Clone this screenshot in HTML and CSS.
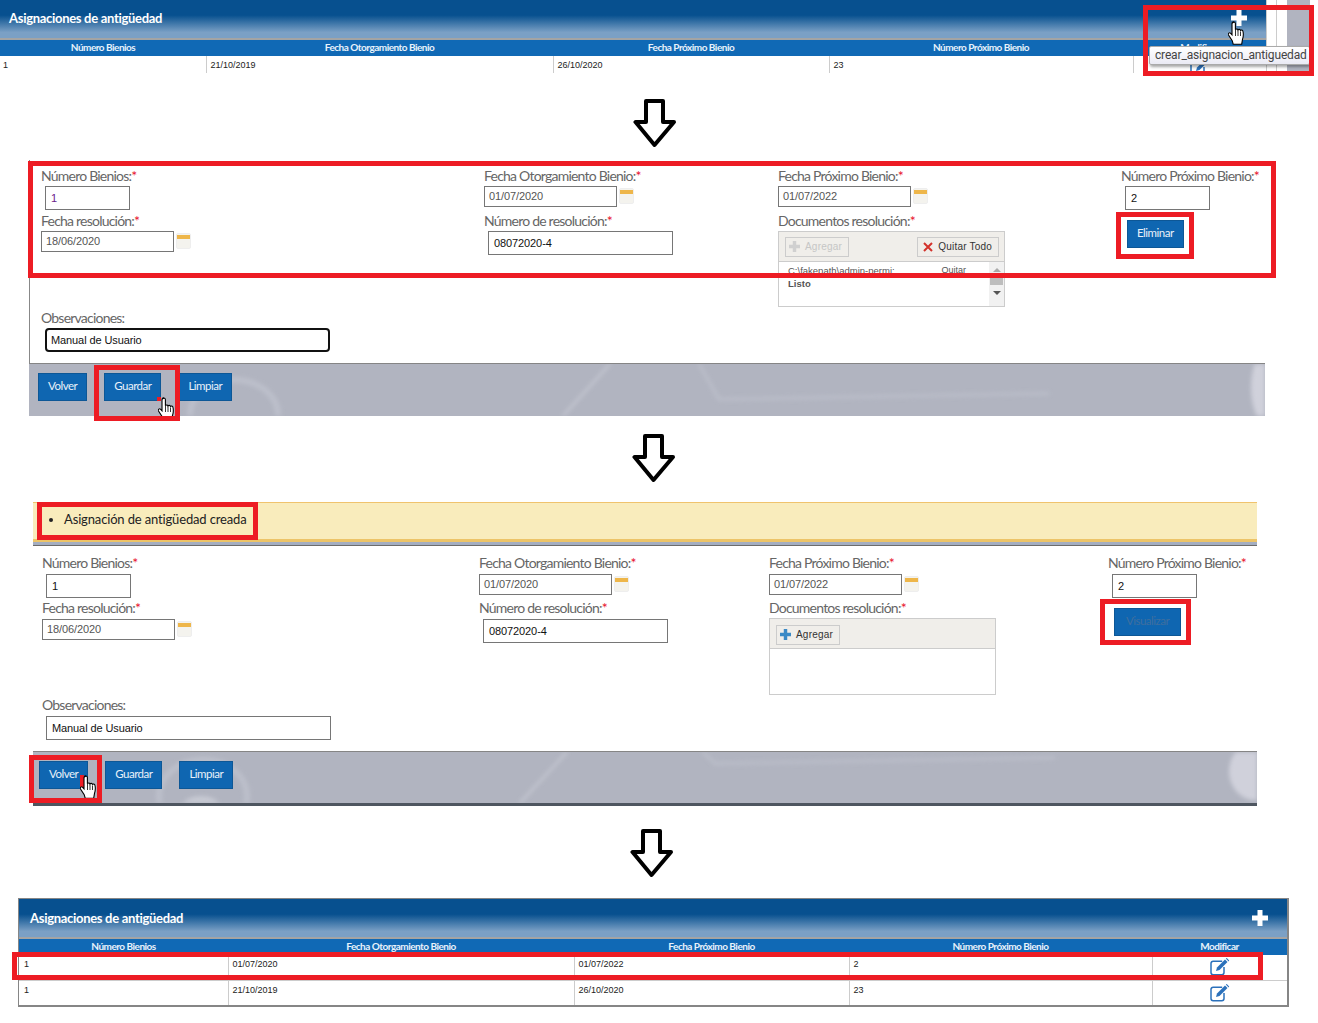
FILE: index.html
```html
<!DOCTYPE html>
<html lang="en">
<head>
    <meta charset="UTF-8">
    <title>Asignaciones de antigüedad</title>
    <link rel="stylesheet" href="styles.css">
</head>

<body>
    <svg class="defs" width="0" height="0">
        <symbol id="hand" viewBox="1 0 16 25">
            <path d="M5 1.500c1 -.8 2.300 -.3 2.400 1v6.300c.4 -1 2.300 -1 2.600 .2c.5 -.9 2.200 -.8 2.500 .4c.6 -.7 2.300 -.4 2.500 1c.5 2.400 .4 5.500 -.5 8l-.8 4.800h-8.500l-1 -3.500l-3.700 -5.700c-.9 -1.600 .9 -2.900 2.200 -1.700l1.300 1.500v-11.300c0 -.4 .1 -.8 1 -1.500z" fill="#fff" stroke="#000" stroke-width="1.100"/>
            <path d="M7.500 9v6M10 9.500v5.500M12.500 10.500v4.500" stroke="#000" stroke-width=".8" fill="none"/>
        </symbol>
        <symbol id="arrow" viewBox="0 0 44 50">
            <path d="M13 3h17v21h11l-19.500 23l-19 -23h10.500z" fill="#fff" stroke="#000" stroke-width="4" stroke-linejoin="round"/>
        </symbol>
        <symbol id="plus" viewBox="0 0 16 16">
            <path d="M5.500 0h5v5.500h5.500v5h-5.500v5.500h-5v-5.500h-5.500v-5h5.500z"/>
        </symbol>
        <symbol id="edit" viewBox="0 0 20 18">
            <path d="M14 9v5.500c0 1.400 -.8 2.200 -2.200 2.200h-8.600c-1.400 0 -2.200 -.8 -2.200 -2.200v-9c0 -1.400 .8 -2.200 2.200 -2.200h9" fill="none" stroke="#2b71bb" stroke-width="1.500"/>
            <path d="M6 13l1 -3.500l8 -8l2.500 2.500l-8 8z" fill="#2b71bb"/>
            <path d="M15.800 .6l1 -.5l2.400 2.400l-.6 1z" fill="#2b71bb"/>
        </symbol>
    </svg>

    <div class="panelRow">
        <div class="listPanel">
            <div class="listHead">
                <span>Asignaciones de antigüedad</span>
                <svg class="plusIcon"><use href="#plus"/></svg>
            </div>
            <table class="listTable">
                <colgroup><col class="c1"><col class="c2"><col class="c3"><col class="c4"><col class="c5"></colgroup>
                <tr>
                    <th>Número Bienios</th>
                    <th>Fecha Otorgamiento Bienio</th>
                    <th>Fecha Próximo Bienio</th>
                    <th>Número Próximo Bienio</th>
                    <th>Modificar</th>
                </tr>
                <tr class="shortRow">
                    <td>1</td>
                    <td>21/10/2019</td>
                    <td>26/10/2020</td>
                    <td>23</td>
                    <td class="editCell"><svg class="editIcon"><use href="#edit"/></svg></td>
                </tr>
            </table>
        </div>
        <div class="sideGap"></div>
        <div class="sideBlock"></div>
    </div>

    <svg class="arrow arrow1"><use href="#arrow"/></svg>

    <section class="formBlock blockOne">
        <div class="formBody">
            <div class="formGrid">
                <div class="field">
                    <label>Número Bienios:<i>*</i></label>
                    <div class="textInput small indent purple">1</div>
                </div>
                <div class="field">
                    <label>Fecha Otorgamiento Bienio:<i>*</i></label>
                    <div class="dateRow"><div class="dateInput">01/07/2020</div><span class="calendar"></span></div>
                </div>
                <div class="field">
                    <label>Fecha Próximo Bienio:<i>*</i></label>
                    <div class="dateRow"><div class="dateInput">01/07/2022</div><span class="calendar"></span></div>
                </div>
                <div class="field">
                    <label>Número Próximo Bienio:<i>*</i></label>
                    <div class="textInput small indent">2</div>
                </div>

                <div class="field">
                    <label>Fecha resolución:<i>*</i></label>
                    <div class="dateRow"><div class="dateInput">18/06/2020</div><span class="calendar"></span></div>
                </div>
                <div class="field">
                    <label>Número de resolución:<i>*</i></label>
                    <div class="textInput wide indent">08072020-4</div>
                </div>
                <div class="field">
                    <label>Documentos resolución:<i>*</i></label>
                    <div class="docBox">
                        <div class="docBar spread">
                            <span class="docBtn disabled"><svg class="miniPlus grey"><use href="#plus"/></svg>Agregar</span>
                            <span class="docBtn"><svg class="miniX" viewBox="0 0 10 10"><path d="M1 1l8 8M9 1l-8 8"/></svg>Quitar Todo</span>
                        </div>
                        <div class="docList">
                            <div class="docFile"><span>C:\fakepath\admin-permi:</span><span class="quit">Quitar</span></div>
                            <div class="docDone">Listo</div>
                            <div class="scroll"><b class="up"></b><b class="thumb"></b><b class="down"></b></div>
                        </div>
                    </div>
                </div>
                <div class="field btnField"><button class="btn">Eliminar</button></div>
            </div>
            <div class="field obs">
                <label>Observaciones:</label>
                <div class="textInput long indent focused">Manual de Usuario</div>
            </div>
        </div>
        <div class="actionBar">
            <svg class="barArt" viewBox="0 0 1236 53" preserveAspectRatio="none">
                <ellipse cx="205" cy="52" rx="44" ry="36" fill="none" stroke="#c3c6d1" stroke-width="6"/>
                <path d="M581 0l-47 53" stroke="#d6d8e0" stroke-width="2" fill="none"/>
                <path d="M670 0l20 36l330 -6" stroke="#c2c5d0" stroke-width="3" fill="none"/>
                <ellipse cx="1240" cy="24" rx="18" ry="40" fill="#e1e1ea"/>
            </svg>
            <button class="btn">Volver</button>
            <button class="btn">Guardar</button>
            <button class="btn">Limpiar</button>
        </div>
    </section>

    <svg class="arrow arrow2"><use href="#arrow"/></svg>

    <section class="formBlock blockTwo">
        <div class="message">
            <ul><li>Asignación de antigüedad creada</li></ul>
        </div>
        <div class="strip"></div>
        <div class="formBody">
            <div class="formGrid">
                <div class="field">
                    <label>Número Bienios:<i>*</i></label>
                    <div class="textInput small indent">1</div>
                </div>
                <div class="field">
                    <label>Fecha Otorgamiento Bienio:<i>*</i></label>
                    <div class="dateRow"><div class="dateInput">01/07/2020</div><span class="calendar"></span></div>
                </div>
                <div class="field">
                    <label>Fecha Próximo Bienio:<i>*</i></label>
                    <div class="dateRow"><div class="dateInput">01/07/2022</div><span class="calendar"></span></div>
                </div>
                <div class="field">
                    <label>Número Próximo Bienio:<i>*</i></label>
                    <div class="textInput small indent">2</div>
                </div>

                <div class="field">
                    <label>Fecha resolución:<i>*</i></label>
                    <div class="dateRow"><div class="dateInput">18/06/2020</div><span class="calendar"></span></div>
                </div>
                <div class="field">
                    <label>Número de resolución:<i>*</i></label>
                    <div class="textInput wide indent">08072020-4</div>
                </div>
                <div class="field">
                    <label>Documentos resolución:<i>*</i></label>
                    <div class="docBox">
                        <div class="docBar">
                            <span class="docBtn"><svg class="miniPlus"><use href="#plus"/></svg>Agregar</span>
                        </div>
                    </div>
                </div>
                <div class="field btnField"><button class="btn dim">Visualizar</button></div>
            </div>
            <div class="field obs">
                <label>Observaciones:</label>
                <div class="textInput long indent">Manual de Usuario</div>
            </div>
        </div>
        <div class="actionBar dark">
            <svg class="barArt" viewBox="0 0 1224 53" preserveAspectRatio="none">
                <ellipse cx="170" cy="46" rx="44" ry="38" fill="none" stroke="#c3c6d1" stroke-width="6"/>
                <ellipse cx="168" cy="58" rx="20" ry="12" fill="#d5d7df"/>
                <path d="M534 0l-47 53" stroke="#d6d8e0" stroke-width="2" fill="none"/>
                <path d="M670 0l12 12l340 -6" stroke="#c2c5d0" stroke-width="3" fill="none"/>
                <ellipse cx="1222" cy="20" rx="26" ry="30" fill="#e1e1ea"/>
            </svg>
            <button class="btn">Volver</button>
            <button class="btn">Guardar</button>
            <button class="btn">Limpiar</button>
        </div>
    </section>

    <svg class="arrow arrow3"><use href="#arrow"/></svg>

    <div class="listPanel framed">
        <div class="listHead">
            <span>Asignaciones de antigüedad</span>
            <svg class="plusIcon"><use href="#plus"/></svg>
        </div>
        <table class="listTable">
            <colgroup><col class="d1"><col class="d2"><col class="d3"><col class="d4"><col class="d5"></colgroup>
            <tr>
                <th>Número Bienios</th>
                <th>Fecha Otorgamiento Bienio</th>
                <th>Fecha Próximo Bienio</th>
                <th>Número Próximo Bienio</th>
                <th>Modificar</th>
            </tr>
            <tr>
                <td>1</td>
                <td>01/07/2020</td>
                <td>01/07/2022</td>
                <td>2</td>
                <td class="editCell"><svg class="editIcon"><use href="#edit"/></svg></td>
            </tr>
            <tr>
                <td>1</td>
                <td>21/10/2019</td>
                <td>26/10/2020</td>
                <td>23</td>
                <td class="editCell"><svg class="editIcon"><use href="#edit"/></svg></td>
            </tr>
        </table>
    </div>

    <!-- annotations drawn over the screenshots -->
    <div class="tooltip">crear_asignacion_antiguedad</div>
    <svg class="hand hand1"><use href="#hand"/></svg>
    <span class="redDot dot2"></span>
    <svg class="hand hand2"><use href="#hand"/></svg>
    <span class="redDot dot3"></span>
    <svg class="hand hand3"><use href="#hand"/></svg>

    <div class="mark m1"></div>
    <div class="mark m2"></div>
    <div class="mark m3"></div>
    <div class="mark m4"></div>
    <div class="mark m5"></div>
    <div class="mark m6"></div>
    <div class="mark m7"></div>
    <div class="mark m8"></div>
</body></html>
```

FILE: styles.css
```css
* {
    margin: 0;
    padding: 0;
    box-sizing: border-box;
}

body {
    position: relative;
    width: 1318px;
    height: 1023px;
    overflow: hidden;
    background: #fff;
    font-family: Lato, "Liberation Sans", sans-serif;
}

.defs {
    position: absolute;
}

/* list panels */
.panelRow {
    display: flex;
    height: 73px;
}

.listPanel {
    width: 1266px;
    overflow: hidden;
}

.listPanel.framed {
    width: 1271px;
    height: 109px;
    margin-left: 18px;
    margin-top: 20px;
    border: 2px solid #868686;
    border-top-width: 1px;
    border-left-width: 1px;
}

.sideGap {
    width: 11px;
    height: 73px;
    border-left: 1px solid #ccc;
    border-right: 1px solid #ccc;
}

.sideBlock {
    width: 23px;
    height: 73px;
    margin-left: 10px;
    background: #b1b4c0;
}

.listHead {
    display: flex;
    justify-content: space-between;
    height: 40px;
    padding: 10px 19px 0 9px;
    background: linear-gradient(#07508f 0, #07508f 40%, #7ba0c5 85%, #7ba0c5 95%);
    border-bottom: 2px solid #a4a4a4;
    color: #fff;
    font-size: 13px;
    font-weight: 700;
    letter-spacing: -0.3px;
}

.framed .listHead {
    padding: 11px 19px 0 11px;
}

.plusIcon {
    width: 16px;
    height: 16px;
    fill: #fff;
}

.listTable {
    width: 100%;
    table-layout: fixed;
    border-collapse: collapse;
}

.c1 { width: 206px; }
.c2 { width: 347px; }
.c3 { width: 276px; }
.c4 { width: 304px; }
.d1 { width: 209px; }
.d2 { width: 346px; }
.d3 { width: 275px; }
.d4 { width: 303px; }

.listTable th {
    height: 16px;
    padding-bottom: 2px;
    background: #1069b5;
    color: #e8f2fb;
    font-size: 10px;
    font-weight: 700;
    letter-spacing: -0.5px;
    vertical-align: middle;
}

.listTable td {
    height: 25px;
    padding: 0 0 6px 4px;
    border-left: 1px solid #ccc;
    border-bottom: 1px solid #ccc;
    font-family: "Liberation Sans", sans-serif;
    font-size: 9px;
    color: #222;
}

.listTable td:first-child {
    border-left: none;
    padding-left: 3px;
}

.framed .listTable td:first-child {
    padding-left: 5px;
}

.shortRow td {
    height: 17px;
    padding: 0 0 3px 4px;
    border-bottom: none;
}

.listTable .editCell {
    padding: 0;
    text-align: center;
    overflow: hidden;
}

.editIcon {
    display: block;
    width: 20px;
    height: 18px;
    margin: 0 auto;
}

.shortRow .editIcon {
    margin-top: 2px;
}

/* arrows between steps */
.arrow {
    display: block;
    width: 44px;
    height: 50px;
}

.arrow1 { margin: 25px 0 0 633px; }
.arrow2 { margin: 17px 0 0 632px; }
.arrow3 { margin: 22px 0 0 630px; }

/* forms */
.blockOne {
    width: 1236px;
    margin: 12px 0 0 29px;
}

.blockOne .formBody {
    height: 203px;
    padding: 8px 0 0 11px;
    border-left: 1px solid #888;
}

.blockTwo {
    width: 1224px;
    margin: 19px 0 0 33px;
}

.blockTwo .formBody {
    height: 205px;
    padding: 10px 0 0 9px;
}

.formGrid {
    display: grid;
    grid-template-columns: 443px 294px 343px 1fr;
    grid-template-rows: 45px 97px;
}

.blockTwo .formGrid {
    grid-template-columns: 437px 290px 339px 1fr;
}

.field label {
    display: block;
    height: 18px;
    font-size: 14px;
    line-height: 15px;
    color: #666;
    letter-spacing: -0.78px;
    white-space: nowrap;
}

.blockTwo .field label {
    line-height: 13px;
}

.field label i {
    color: #e8112d;
    font-style: normal;
}

.textInput,
.dateInput {
    border: 1px solid #767676;
    background: #fff;
    font-family: "Liberation Sans", sans-serif;
    font-size: 11px;
    letter-spacing: -0.1px;
}

.textInput {
    height: 24px;
    padding: 5px 5px 0;
    color: #111;
}

.indent { margin-left: 4px; }
.small { width: 85px; }
.wide { width: 185px; }
.long { width: 285px; }
.purple { color: #6a1a8a; }

.focused {
    height: 24px;
    border: 2px solid #111;
    border-radius: 4px;
    padding: 4px 4px 0;
}

.dateRow {
    display: flex;
    align-items: flex-start;
}

.dateInput {
    width: 133px;
    height: 21px;
    padding: 3px 4px 0;
    color: #555;
}

.calendar {
    width: 15px;
    height: 16px;
    margin: 2px 0 0 2px;
    border: 1px solid #eee;
    border-radius: 2px;
    background: linear-gradient(#f4f3ee 0, #f4f3ee 1px, #eeb64a 1px, #eeb64a 5px, #f4f3ee 5px);
}

.docBox {
    width: 227px;
    height: 76px;
    border: 1px solid #ccc;
}

.blockTwo .docBox {
    height: 77px;
    margin-top: -1px;
}

.docBar {
    display: flex;
    align-items: center;
    height: 30px;
    padding: 0 5px 0 6px;
    background: #f0eeea;
    border-bottom: 1px solid #ccc;
}

.blockTwo .docBar {
    padding-top: 2px;
}

.docBar.spread {
    justify-content: space-between;
}

.docBtn {
    display: flex;
    align-items: center;
    gap: 5px;
    height: 20px;
    padding: 0 6px 0 3px;
    border: 1px solid #ccc;
    font-family: "Liberation Sans", sans-serif;
    font-size: 10px;
    letter-spacing: 0.2px;
    color: #333;
}

.docBtn.disabled {
    color: #c6c6c6;
}

.miniPlus {
    width: 11px;
    height: 11px;
    fill: #3a8ac6;
}

.miniPlus.grey {
    fill: #d0d0d0;
}

.miniX {
    width: 10px;
    height: 10px;
    margin-left: 2px;
    fill: none;
    stroke: #d3322b;
    stroke-width: 2;
}

.docList {
    position: relative;
    height: 44px;
    overflow: hidden;
    font-family: "Liberation Sans", sans-serif;
    font-size: 9.500px;
    color: #555;
}

.docFile {
    display: flex;
    justify-content: space-between;
    width: 178px;
    margin-left: 9px;
    padding-top: 3px;
}

.quit {
    font-size: 9px;
}

.docDone {
    margin: 2px 0 0 9px;
    font-weight: 700;
}

.scroll {
    position: absolute;
    top: 0;
    right: 0;
    display: flex;
    flex-direction: column;
    align-items: center;
    width: 15px;
    height: 44px;
    background: #f1f1f1;
}

.scroll b {
    display: block;
}

.scroll .up {
    margin-top: 6px;
    border: 4px solid transparent;
    border-top: none;
    border-bottom: 4px solid #aaa;
}

.scroll .thumb {
    width: 13px;
    height: 11px;
    margin-top: 2px;
    background: #bdbdbd;
}

.scroll .down {
    margin-top: 6px;
    border: 4px solid transparent;
    border-bottom: none;
    border-top: 4px solid #555;
}

.btnField {
    padding: 7px 0 0 6px;
}

.btn {
    position: relative;
    height: 28px;
    padding: 0 9px 4px;
    background: #0f66b1;
    border: 1px solid #0d5796;
    color: #e9f1f9;
    font-family: Lato, "Liberation Sans", sans-serif;
    font-size: 11.500px;
    letter-spacing: -0.5px;
}

.btn.dim {
    width: 67px;
    color: #3f6f9f;
}

.obs {
    margin-top: 0;
}

/* message */
.message {
    height: 40px;
    padding: 8px 0 0 31px;
    background: #f9ecbc;
    border-top: 1px solid #f0c36d;
    border-bottom: 3px solid #edc468;
    font-size: 13px;
    letter-spacing: -0.15px;
    color: #222;
}

.strip {
    height: 4px;
    background: #a4aec1;
    border-bottom: 1px solid #6c6c6c;
}

/* bottom bar */
.actionBar {
    position: relative;
    display: flex;
    gap: 17px;
    height: 53px;
    padding: 9px 0 0 9px;
    background: #b1b4c0;
    border-top: 1px solid #858585;
    overflow: hidden;
}

.actionBar.dark {
    height: 55px;
    padding-left: 6px;
    border-bottom: 3px solid #4e5660;
}

.barArt {
    position: absolute;
    top: 0;
    left: 0;
    width: 100%;
    height: 100%;
    filter: blur(2px);
    opacity: 0.65;
}

/* overlays */
.tooltip {
    position: absolute;
    left: 1149px;
    top: 46px;
    width: 161px;
    height: 19px;
    padding-left: 5px;
    background: linear-gradient(#fff, #eaeaf4);
    border: 1px solid #aaa;
    border-radius: 2px;
    box-shadow: 1px 2px 3px rgba(0, 0, 0, 0.35);
    font-family: Roboto, sans-serif;
    font-size: 12px;
    letter-spacing: -0.16px;
    line-height: 17px;
    color: #444;
}

.hand {
    position: absolute;
    width: 18px;
    height: 25px;
}

.hand1 { left: 1228px; top: 21px; }
.hand2 { left: 158px; top: 397px; }
.hand3 { left: 80px; top: 775px; }

.redDot {
    position: absolute;
    background: #ed1c24;
}

.dot2 { left: 157px; top: 397px; width: 4px; height: 4px; }
.dot3 { left: 80px; top: 775px; width: 4px; height: 12px; }

.mark {
    position: absolute;
    border: 5px solid #ed1c24;
}

.m1 { left: 1143px; top: 5px; width: 171px; height: 71px; }
.m2 { left: 28px; top: 161px; width: 1248px; height: 117px; }
.m3 { left: 1116px; top: 212px; width: 78px; height: 47px; }
.m4 { left: 94px; top: 365px; width: 86px; height: 56px; }
.m5 { left: 37px; top: 502px; width: 221px; height: 38px; }
.m6 { left: 1100px; top: 599px; width: 91px; height: 46px; }
.m7 { left: 29px; top: 755px; width: 73px; height: 48px; }
.m8 { left: 12px; top: 952px; width: 1251px; height: 28px; }
```
